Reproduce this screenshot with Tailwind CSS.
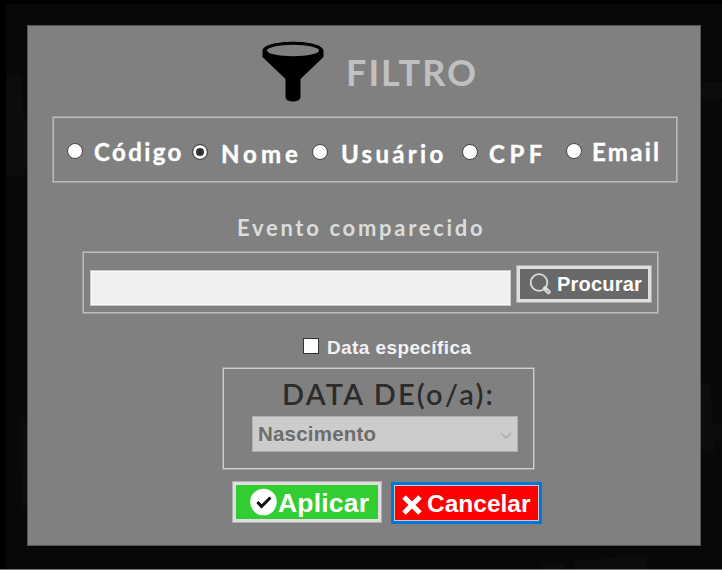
<!DOCTYPE html>
<html lang="pt-BR">
<head>
<meta charset="utf-8">
<title>Filtro</title>
<script src="https://cdn.jsdelivr.net/npm/@tailwindcss/browser@4"></script>
</head>
<body class="w-[722px] h-[570px] overflow-hidden bg-[#08080a] font-['Liberation_Sans',sans-serif]">
<div class="relative w-[722px] h-[570px] border-t-4 border-l-[6px] border-black pl-[21px] pt-[21px]">
  <svg class="absolute -left-[6px] -top-1" width="722" height="570">
    <path fill="#0d0c0b" d="M6 75h15l2 40h4v60H6zM19 417h8v96l-5-5zM700 82h22v16l-22 2zM700 383h10l3 40h9v18h-9l2 12h-15zM542 563h22v7h-22zM575 560l72-4v14h-72z"/>
    <path stroke="#777" d="M0 569.5H722"/>
  </svg>
  <main class="relative w-[674px] h-[521px] bg-[#808080] border border-[#555] flex flex-col">
    <header class="flex h-[78px] mt-[14px] pl-[234px]">
      <svg class="shrink-0" width="62" height="63" viewBox="0 0 62 63">
        <path d="M.5 11C.5-1.300 61.500-1.300 61.500 11V17L38.500 39V57C38.500 63 23.500 63 23.500 57V39L.5 17Z"/>
        <ellipse cx="31" cy="10.500" rx="26" ry="5.800" fill="#808080"/>
      </svg>
      <h1 class="ml-[22px] mt-[12px] font-[Lato] font-bold text-[36px] leading-[40px] tracking-[2px] text-[#c0c0c0]">FILTRO</h1>
    </header>
    <section class="w-[626px] h-[67px] ml-[24px] -mt-[2px] border border-[#a0a0a0] shadow-[inset_0_0_0_1px_#bbb] flex items-start pl-[14px] pt-[21px] text-white font-[Lato] font-bold text-[24px] leading-[28px] whitespace-nowrap">
      <label class="flex w-[125px]"><i class="size-[16px] mt-[5px] rounded-full bg-white border border-[#444] shrink-0"></i><span class="ml-[11px] tracking-[2.4px] [-webkit-text-stroke:0.4px_white]">Código</span></label>
      <label class="flex w-[120px] pt-[1px]"><i class="size-[16px] mt-[5px] rounded-full bg-[#333] border border-[#444] shadow-[inset_0_0_0_3px_white] shrink-0"></i><span class="ml-[13px] mt-[1px] tracking-[4px] [-webkit-text-stroke:0.4px_white]">Nome</span></label>
      <label class="flex w-[150px] pt-[1px]"><i class="size-[16px] mt-[5px] rounded-full bg-white border border-[#444] shrink-0"></i><span class="ml-[13px] mt-[1px] tracking-[3.300px] [-webkit-text-stroke:0.4px_white]">Usuário</span></label>
      <label class="flex w-[104px] pt-[1px]"><i class="size-[16px] mt-[5px] rounded-full bg-white border border-[#444] shrink-0"></i><span class="ml-[11px] mt-[1px] tracking-[4.500px] [-webkit-text-stroke:0.4px_white]">CPF</span></label>
      <label class="flex"><i class="size-[16px] mt-[5px] rounded-full bg-white border border-[#444] shrink-0"></i><span class="ml-[10px] tracking-[2.300px] [-webkit-text-stroke:0.4px_white]">Email</span></label>
    </section>
    <h2 class="ml-[209px] mt-[31px] h-[37px] font-[Lato] font-bold text-[22px] leading-[28px] tracking-[2.700px] text-[#dcdcdc] whitespace-nowrap">Evento comparecido</h2>
    <section class="w-[577px] h-[63px] ml-[54px] border border-[#a0a0a0] shadow-[inset_0_0_0_1px_#bbb] flex pl-[7px]">
      <div class="w-[421px] h-[36px] mt-[18px] bg-[#efefef] border border-[#c8c8c8] shadow-[inset_0_0_0_1px_#f8f8f8]"></div>
      <button class="ml-[5px] mt-[13px] w-[136px] h-[38px] bg-[#696969] border-4 border-[#dedede] outline outline-1 -outline-offset-1 outline-[#b0b0b0] flex items-center text-white font-bold text-[20px] leading-none">
        <svg class="ml-[9px] shrink-0" width="24" height="24" viewBox="0 0 24 24" fill="none" stroke="#ddd"><circle cx="10" cy="10.500" r="8.300" stroke-width="1.800"/><path d="M16 16.500l3.500 3.500" stroke-width="4.500" stroke-linecap="round"/><path d="M18 18.500l1.500 1.500" stroke="#777" stroke-linecap="round"/></svg>
        <span class="ml-[4px] tracking-[0.2px]">Procurar</span>
      </button>
    </section>
    <label class="flex h-[53px] pt-[23px] pl-[275px] text-[#f2f2f2] font-bold text-[19px] leading-[22px]"><i class="size-[16px] mt-[1px] bg-white border border-[#333]"></i><span class="ml-[8px] tracking-[0.4px]">Data específica</span></label>
    <section class="w-[313px] h-[103px] ml-[194px] border border-[#a0a0a0] shadow-[inset_0_0_0_1px_#d0d0d0]">
      <h3 class="ml-[59px] mt-[8px] h-[40px] font-[Lato] font-semibold text-[29px] leading-[36px] tracking-[2.200px] text-[#2b2b2b] whitespace-nowrap">DATA DE(o/a):</h3>
      <div class="ml-[29px] w-[266px] h-[36px] bg-[#ccc] border border-[#b0b0b0] flex items-center justify-between pl-[5px] pr-[5px] text-[#6d6d6d] font-bold text-[20.500px] leading-none">
        <span class="tracking-[0.2px]">Nascimento</span>
        <svg class="mt-[3px]" width="12" height="8" viewBox="0 0 12 8" fill="none" stroke="#aaa" stroke-width="1.300"><path d="M1 1l5 5 5-5"/></svg>
      </div>
    </section>
    <footer class="flex mt-[11px] ml-[204px] gap-[9px] text-white font-bold leading-none">
      <button class="w-[150px] h-[42px] bg-[#32cd32] border-4 border-[#dedede] outline outline-1 -outline-offset-1 outline-[#b0b0b0] flex items-center pl-[14px] text-[26.500px]">
        <svg class="shrink-0" width="27" height="28" viewBox="0 0 27 28"><circle cx="13.500" cy="14" r="13.300" fill="#fff"/><path d="M7.500 14l4 4.500 9-9" fill="none" stroke="#111" stroke-width="3"/></svg>
        <span class="ml-[1px] mt-[2px] tracking-[0.2px]">Aplicar</span>
      </button>
      <button class="w-[151px] h-[42px] mt-[1px] bg-[red] border-[3px] border-[#0078d7] shadow-[inset_0_0_0_1px_#d0c8d0] flex items-center pl-[7px] text-[24.500px]">
        <svg class="shrink-0 mt-[3px]" width="22" height="22" viewBox="0 0 22 22"><path d="M3 3l16 16M19 3L3 19" stroke="#fff" stroke-width="5"/></svg>
        <span class="ml-[4px] mt-[2px]">Cancelar</span>
      </button>
    </footer>
  </main>
</div>
</body>
</html>
